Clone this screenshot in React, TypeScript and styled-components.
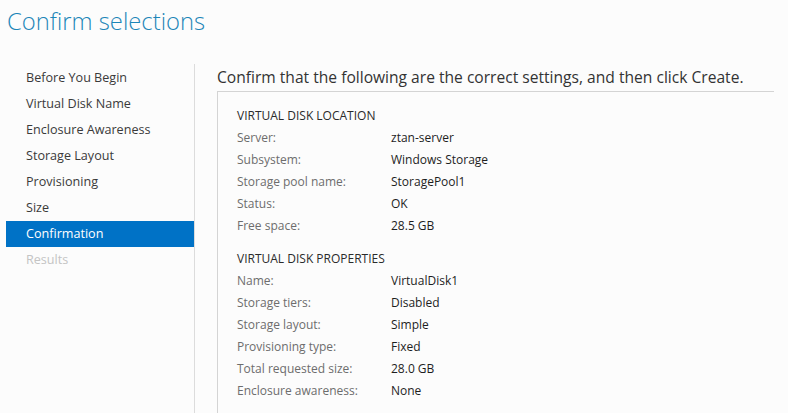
import styled, { createGlobalStyle } from "styled-components";

const font = `"Segoe UI", "Open Sans", "Noto Sans", sans-serif`;

const GlobalStyle = createGlobalStyle`
  html, body {
    margin: 0;
    padding: 0;
    background: #fcfcfc;
    font-family: ${font};
  }
`;

const Page = styled.div`
  width: 788px;
  height: 413px;
  overflow: hidden;
  display: flex;
  flex-direction: column;
`;

const Title = styled.h1`
  margin: 0;
  padding: 5px 0 0 7px;
  height: 58px;
  box-sizing: border-box;
  font-size: 23.8px;
  font-weight: 300;
  color: #1c86b8;
`;

const Body = styled.div`
  flex: 1;
  display: flex;
`;

const Nav = styled.ul`
  list-style: none;
  margin: 6px 0 0 0;
  padding: 1px 0 0 6px;
  width: 188px;
  border-right: 1px solid #dcdcdc;
`;

const NavItem = styled.li<{ $active?: boolean; $disabled?: boolean }>`
  height: 26px;
  line-height: 26px;
  padding-left: 20px;
  font-size: 12.6px;
  color: ${(p) => (p.$active ? "#ffffff" : p.$disabled ? "#c4c4c4" : "#3a3a3a")};
  background: ${(p) => (p.$active ? "#0072c6" : "transparent")};
`;

const Main = styled.div`
  flex: 1;
  padding: 8px 14px 0 22px;
  display: flex;
  flex-direction: column;
`;

const Lead = styled.div`
  font-size: 15.6px;
  color: #333;
  height: 25px;
  line-height: 22px;
  white-space: nowrap;
`;

const Box = styled.div`
  flex: 1;
  border-top: 1px solid #d4d4d4;
  border-left: 1px solid #d4d4d4;
  background: #fcfcfc;
  padding: 13px 0 0 19px;
`;

const Section = styled.div`
  margin-bottom: 11px;
`;

const SectionTitle = styled.div`
  font-size: 12px;
  color: #2b2b2b;
  height: 22px;
  line-height: 22px;
`;

const Row = styled.div`
  display: grid;
  grid-template-columns: 154px 1fr;
  height: 22px;
  line-height: 22px;
  font-size: 12px;
`;

const Label = styled.span`
  color: #6d6d6d;
`;

const Value = styled.span`
  color: #1e1e1e;
`;

const steps = [
  "Before You Begin",
  "Virtual Disk Name",
  "Enclosure Awareness",
  "Storage Layout",
  "Provisioning",
  "Size",
  "Confirmation",
  "Results",
];

const sections: { title: string; rows: [string, string][] }[] = [
  {
    title: "VIRTUAL DISK LOCATION",
    rows: [
      ["Server:", "ztan-server"],
      ["Subsystem:", "Windows Storage"],
      ["Storage pool name:", "StoragePool1"],
      ["Status:", "OK"],
      ["Free space:", "28.5 GB"],
    ],
  },
  {
    title: "VIRTUAL DISK PROPERTIES",
    rows: [
      ["Name:", "VirtualDisk1"],
      ["Storage tiers:", "Disabled"],
      ["Storage layout:", "Simple"],
      ["Provisioning type:", "Fixed"],
      ["Total requested size:", "28.0 GB"],
      ["Enclosure awareness:", "None"],
    ],
  },
];

export default function App() {
  return (
    <Page>
      <GlobalStyle />
      <Title>Confirm selections</Title>
      <Body>
        <Nav>
          {steps.map((s) => (
            <NavItem
              key={s}
              $active={s === "Confirmation"}
              $disabled={s === "Results"}
            >
              {s}
            </NavItem>
          ))}
        </Nav>
        <Main>
          <Lead>
            Confirm that the following are the correct settings, and then click
            Create.
          </Lead>
          <Box>
            {sections.map((sec) => (
              <Section key={sec.title}>
                <SectionTitle>{sec.title}</SectionTitle>
                {sec.rows.map(([l, v]) => (
                  <Row key={l}>
                    <Label>{l}</Label>
                    <Value>{v}</Value>
                  </Row>
                ))}
              </Section>
            ))}
          </Box>
        </Main>
      </Body>
    </Page>
  );
}
